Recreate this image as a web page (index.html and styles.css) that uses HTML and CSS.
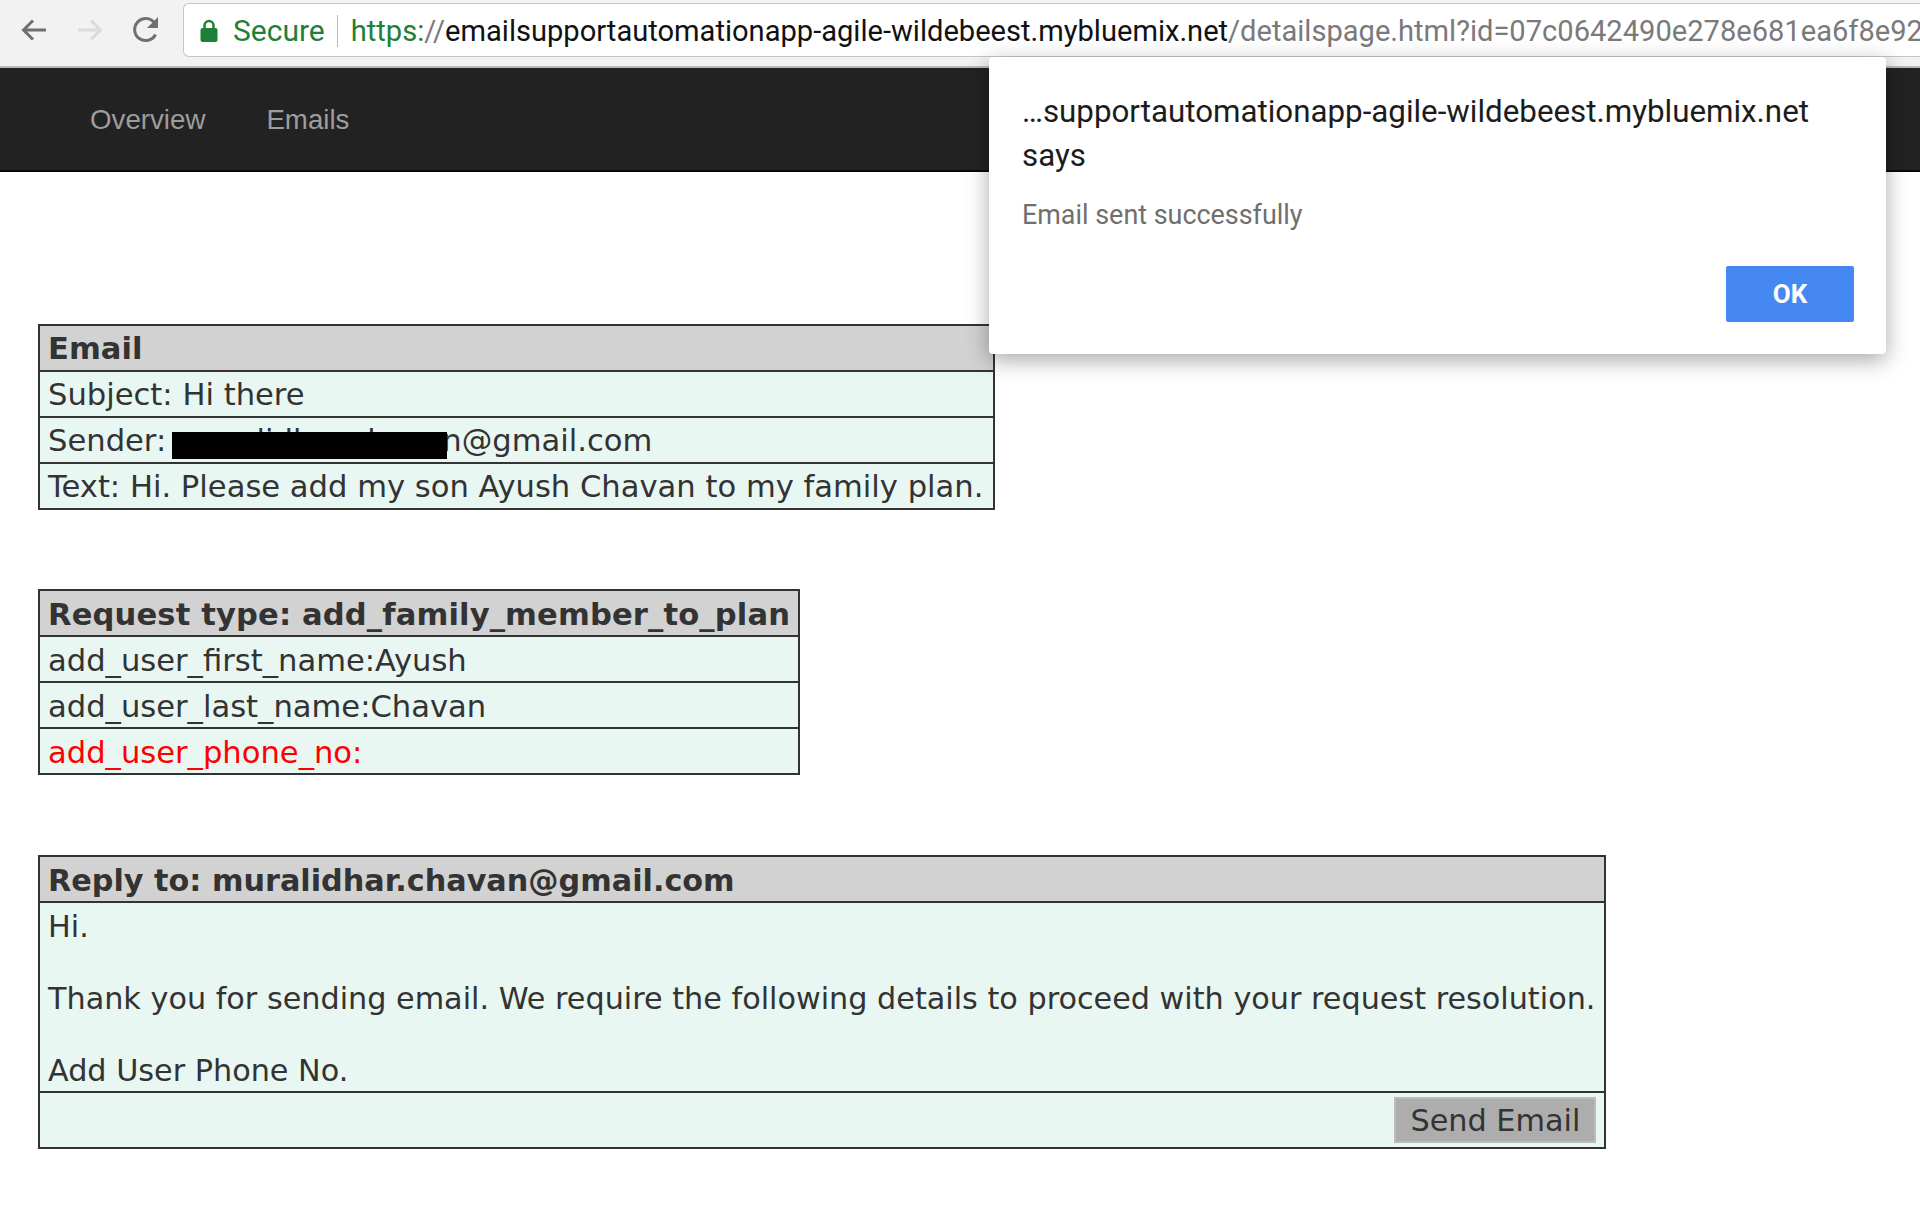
FILE: index.html
```html
<!DOCTYPE html>
<html>
<head>
    <title>Email Details</title>
    <link rel="stylesheet" href="styles.css">
</head>
<body>
    <div class="toolbar">
        <div class="nav-icons">
            <svg width="30" height="30" viewBox="0 0 30 30" class="icon"><path d="M27 15H5M14 5.500L4.500 15l9.500 9.500" fill="none" stroke="#6e7073" stroke-width="3"/></svg>
            <svg width="30" height="30" viewBox="0 0 30 30" class="icon"><path d="M3 15h22M16 5.500l9.500 9.500-9.500 9.500" fill="none" stroke="#dcdcdc" stroke-width="3"/></svg>
            <svg width="30" height="30" viewBox="0 0 30 30" class="icon"><path d="M24.500 19.500A11 11 0 1 1 23.500 8" fill="none" stroke="#6e7073" stroke-width="3"/><path d="M27 2v11H16z" fill="#6e7073"/></svg>
        </div>
        <div class="address-bar">
            <svg width="18" height="24" viewBox="0 0 18 24" class="lock"><path d="M4.500 10V6.500a4.500 4.500 0 0 1 9 0V10" fill="none" stroke="#1e8038" stroke-width="2.500"/><rect x="0.500" y="9" width="17" height="14" rx="2" fill="#1e8038"/></svg>
            <span class="secure">Secure</span>
            <span class="url"><span class="secure">https:</span><span class="muted">//</span>emailsupportautomationapp-agile-wildebeest.mybluemix.net<span class="muted">/detailspage.html?id=07c0642490e278e681ea6f8e92</span></span>
        </div>
    </div>

    <div class="navbar">
        <a class="nav-link">Overview</a>
        <a class="nav-link">Emails</a>
    </div>

    <div class="content">
        <table class="summary-table email-table">
            <tr><th>Email</th></tr>
            <tr><td>Subject: Hi there</td></tr>
            <tr><td>Sender: <span class="redacted">muralidhar.chava</span>n@gmail.com</td></tr>
            <tr><td>Text: Hi. Please add my son Ayush Chavan to my family plan.</td></tr>
        </table>

        <table class="summary-table request-table">
            <tr><th>Request type: add_family_member_to_plan</th></tr>
            <tr><td>add_user_first_name:Ayush</td></tr>
            <tr><td>add_user_last_name:Chavan</td></tr>
            <tr><td class="missing">add_user_phone_no:</td></tr>
        </table>

        <table class="reply-table">
            <tr><th>Reply to: muralidhar.chavan@gmail.com</th></tr>
            <tr><td>Hi.<br><br>Thank you for sending email. We require the following details to proceed with your request resolution.<br><br>Add User Phone No.</td></tr>
            <tr><td class="actions"><button class="send-btn">Send Email</button></td></tr>
        </table>
    </div>

    <div class="dialog">
        <div class="dialog-title">…supportautomationapp-agile-wildebeest.mybluemix.net says</div>
        <div class="dialog-message">Email sent successfully</div>
        <div class="dialog-buttons"><button class="ok-btn">OK</button></div>
    </div>
</body>
</html>
```

FILE: styles.css
```css
html, body {
    margin: 0;
    height: 100%;
    overflow: hidden;
    background: #fff;
}
body {
    font-family: "DejaVu Sans", sans-serif;
    color: #333;
}

/* browser chrome */
.toolbar {
    display: flex;
    align-items: flex-start;
    height: 63px;
    padding-top: 3px;
    background: #f2f2f2;
    border-bottom: 2px solid #b9b9b9;
}
.nav-icons {
    display: flex;
    gap: 26px;
    width: 183px;
    padding: 12px 0 0 19px;
    box-sizing: border-box;
}
.icon {
    display: block;
}
.address-bar {
    flex: 1;
    display: flex;
    align-items: center;
    height: 50px;
    padding: 2px 0 0 16px;
    background: #fff;
    border: 1px solid #c6c6c6;
    border-right: none;
    border-radius: 6px 0 0 6px;
    font-family: Roboto, sans-serif;
    font-size: 30px;
    white-space: nowrap;
    overflow: hidden;
}
.lock {
    flex-shrink: 0;
    margin-right: 15px;
}
.secure {
    color: #1e8038;
}
.address-bar > .secure {
    padding-right: 12px;
    border-right: 1px solid #bbb;
    line-height: 32px;
    margin-right: 13px;
}
.url {
    color: #111;
    font-size: 29.1px;
}
.muted {
    color: #7a7a7a;
}

.navbar {
    display: flex;
    gap: 61px;
    align-items: center;
    height: 100px;
    padding: 2px 0 0 90px;
    background: #222;
    border-bottom: 2px solid #080808;
}
.nav-link {
    color: #9d9d9d;
    font-family: "Liberation Sans", Arial, sans-serif;
    font-size: 27.7px;
}

/* tables */
.content {
    padding: 152px 0 0 38px;
}
table {
    border-collapse: collapse;
    border: 2px solid #333;
    line-height: 36px;
}
th, td {
    padding: 6px 8px 2px;
    text-align: left;
    white-space: nowrap;
    background: #e8f7f2;
    border: 2px solid #333;
}
th {
    background: #d2d2d2;
    font-weight: bold;
}
.summary-table {
    font-size: 30.6px;
}
.email-table {
    margin-bottom: 79px;
}
.email-table th, .email-table td {
    padding: 5px 10px 3px 8px;
}
.request-table {
    margin-bottom: 80px;
}
.request-table th {
    letter-spacing: 0.12px;
}
.reply-table {
    font-size: 30.25px;
}
.reply-table th, .reply-table td {
    padding-right: 9px;
}
.missing {
    color: #f00;
}
.redacted {
    position: relative;
}
.redacted::after {
    content: "";
    position: absolute;
    left: -4px;
    right: -5px;
    top: 9px;
    bottom: -1px;
    background: #000;
}
.reply-table .actions {
    padding: 4px 8px;
    text-align: right;
}
.send-btn {
    display: block;
    margin-left: auto;
    width: 202px;
    height: 46px;
    padding: 0;
    font-family: "DejaVu Sans", sans-serif;
    font-size: 30.3px;
    color: #333;
    background: #adadad;
    border: 2px solid #bcbcbc;
}

/* alert dialog */
.dialog {
    position: absolute;
    left: 989px;
    top: 57px;
    width: 897px;
    height: 297px;
    padding: 33px 32px 0 33px;
    box-sizing: border-box;
    background: #fff;
    border-radius: 4px;
    box-shadow: 0 6px 22px rgba(0, 0, 0, 0.35);
    font-family: Roboto, sans-serif;
}
.dialog-title {
    font-size: 31.3px;
    line-height: 44px;
    color: #1c1c1c;
}
.dialog-message {
    margin-top: 20px;
    font-size: 26.9px;
    line-height: 34px;
    color: #6f6f6f;
}
.dialog-buttons {
    display: flex;
    justify-content: flex-end;
    margin-top: 34px;
}
.ok-btn {
    width: 128px;
    height: 56px;
    background: #4688f1;
    color: #fff;
    border: none;
    border-radius: 2px;
    font-family: Roboto, sans-serif;
    font-size: 26px;
    font-weight: 700;
}
```
